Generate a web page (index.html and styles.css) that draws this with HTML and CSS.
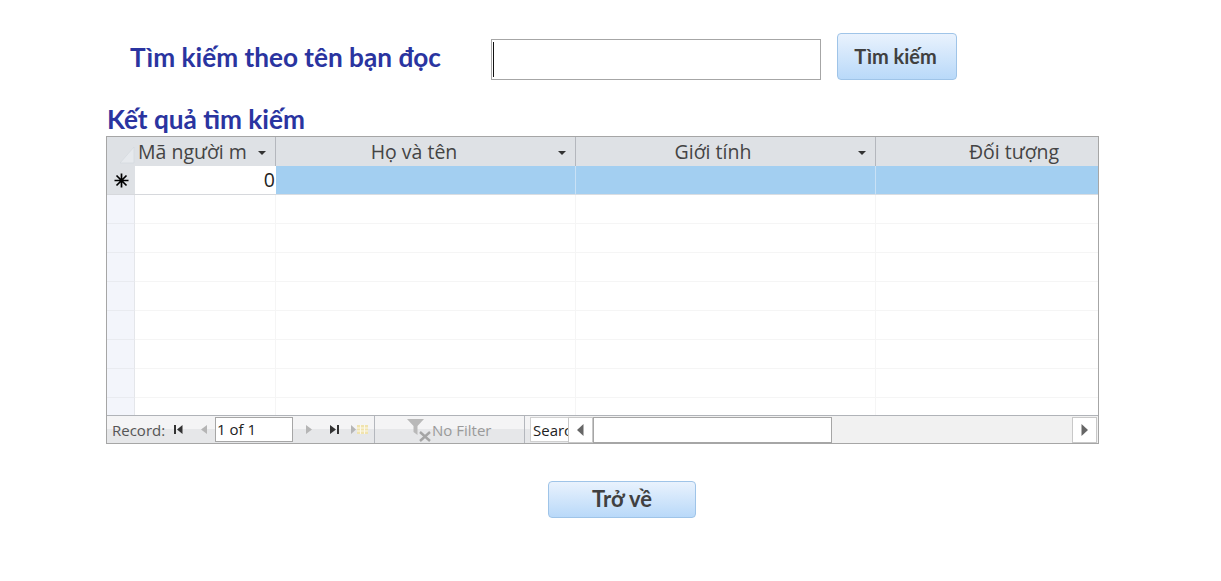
FILE: index.html
```html
<!DOCTYPE html>
<html lang="vi">
<head>
    <meta charset="UTF-8">
    <meta name="viewport" content="width=device-width, initial-scale=1.0">
    <title>Tìm kiếm bạn đọc</title>

    <link rel="stylesheet" href="styles.css">
</head>
<body>
    <div class="fundo">
        <div class="timKiem">
            <h1 class="tieuDe">Tìm kiếm theo tên bạn đọc</h1>
            <div class="oNhap"><span class="conTro"></span></div>
            <button class="nut nutTim">Tìm kiếm</button>
        </div>

        <h2 class="ketQua">Kết quả tìm kiếm</h2>

        <div class="bang">
            <div class="hang hangDau">
                <div class="chon chonDau"><svg width="16" height="18" viewBox="0 0 16 18"><path d="M1 17 L15 1 V17 Z" fill="#e6e9ed" stroke="#d2d6dc" stroke-width="0.6"/></svg></div>
                <div class="cot cot1 dau"><span class="tenCot trai">Mã người m</span><span class="muiTen"></span></div>
                <div class="cot cot2 dau"><span class="tenCot">Họ và tên</span><span class="muiTen"></span></div>
                <div class="cot cot3 dau"><span class="tenCot">Giới tính</span><span class="muiTen"></span></div>
                <div class="cot cot4 dau"><span class="tenCot">Đối tượng</span></div>
            </div>
            <div class="hang hangMoi">
                <div class="chon chonMoi"><svg width="15" height="15" viewBox="0 0 15 15"><path d="M7.5 0.5 V14.5 M0.5 7.5 H14.5 M2.5 2.5 L12.5 12.5 M12.5 2.5 L2.5 12.5" stroke="#000" stroke-width="1.7" fill="none"/></svg></div>
                <div class="cot cot1 so">0</div>
                <div class="cot cot2 chonXanh"></div>
                <div class="cot cot3 chonXanh"></div>
                <div class="cot cot4 chonXanh"></div>
            </div>
            <div class="thanBang">
                <div class="hang"><div class="chon"></div><div class="cot cot1"></div><div class="cot cot2"></div><div class="cot cot3"></div><div class="cot cot4"></div></div>
                <div class="hang"><div class="chon"></div><div class="cot cot1"></div><div class="cot cot2"></div><div class="cot cot3"></div><div class="cot cot4"></div></div>
                <div class="hang"><div class="chon"></div><div class="cot cot1"></div><div class="cot cot2"></div><div class="cot cot3"></div><div class="cot cot4"></div></div>
                <div class="hang"><div class="chon"></div><div class="cot cot1"></div><div class="cot cot2"></div><div class="cot cot3"></div><div class="cot cot4"></div></div>
                <div class="hang"><div class="chon"></div><div class="cot cot1"></div><div class="cot cot2"></div><div class="cot cot3"></div><div class="cot cot4"></div></div>
                <div class="hang"><div class="chon"></div><div class="cot cot1"></div><div class="cot cot2"></div><div class="cot cot3"></div><div class="cot cot4"></div></div>
                <div class="hang"><div class="chon"></div><div class="cot cot1"></div><div class="cot cot2"></div><div class="cot cot3"></div><div class="cot cot4"></div></div>
                <div class="hang"><div class="chon"></div><div class="cot cot1"></div><div class="cot cot2"></div><div class="cot cot3"></div><div class="cot cot4"></div></div>
            </div>
            <div class="thanhDuoi">
                <div class="phanRecord">
                    <span class="chuRecord">Record:</span>
                    <svg class="iconDau" width="11" height="11" viewBox="0 0 11 11"><path d="M1 1 H3 V10 H1 Z M9.5 1 V10 L4 5.5 Z" fill="#333"/></svg>
                    <svg class="iconTruoc" width="8" height="11" viewBox="0 0 8 11"><path d="M7 1 V10 L1 5.5 Z" fill="#b5b5b5"/></svg>
                    <div class="soTrang">1 of 1</div>
                    <svg class="iconSau" width="8" height="11" viewBox="0 0 8 11"><path d="M1 1 V10 L7 5.5 Z" fill="#b5b5b5"/></svg>
                    <svg class="iconCuoi" width="11" height="11" viewBox="0 0 11 11"><path d="M1 1 L7 5.5 L1 10 Z M8 1 H10 V10 H8 Z" fill="#333"/></svg>
                    <svg class="iconMoi" width="19" height="11" viewBox="0 0 19 11"><path d="M1 1 L6 5.5 L1 10 Z" fill="#b5b5b5"/><path d="M7 1 H18 V10 H7 Z" fill="#f0e3ae"/><path d="M10.5 1 V10 M14.5 1 V10 M7 4 H18 M7 7 H18" stroke="#fbf8ea" stroke-width="1"/></svg>
                </div>
                <div class="phanLoc">
                    <svg width="26" height="24" viewBox="0 0 26 24"><path d="M1 1 H18 L11.5 8 V17 L7.5 14 V8 Z" fill="#b9b9b9"/><path d="M14 14 L24 23 M24 14 L14 23" stroke="#a5a5a5" stroke-width="2.4"/></svg>
                    <span>No Filter</span>
                </div>
                <div class="phanTim"><div class="oTim">Search</div></div>
                <div class="cuon">
                    <div class="nutCuon"><svg width="7" height="12" viewBox="0 0 7 12"><path d="M6.5 0 V12 L0 6 Z" fill="#666"/></svg></div>
                    <div class="conChay"></div>
                    <div class="ranhCuon"></div>
                    <div class="nutCuon nutPhai"><svg width="7" height="12" viewBox="0 0 7 12"><path d="M0.5 0 V12 L7 6 Z" fill="#666"/></svg></div>
                </div>
            </div>
        </div>

        <div class="chanTrang">
            <button class="nut nutVe">Trở về</button>
        </div>
    </div>
</body>
</html>
```

FILE: styles.css
```css
*{
    box-sizing: border-box;
}
body{
    margin: 0;
    background-color: white;
}
.fundo{
    width: 1221px;
    height: 581px;
    padding: 33px 0 0 106px;
    overflow: hidden;
    font-family: "Open Sans", sans-serif;
}
.timKiem{
    display: flex;
    align-items: flex-start;
    height: 47px;
}
.tieuDe{
    width: 361px;
    margin: 8px 0 0 24px;
    font-family: Lato, sans-serif;
    font-size: 26.2px;
    line-height: 32px;
    font-weight: 700;
    color: #2a34a0;
}
.oNhap{
    width: 330px;
    height: 41px;
    margin-top: 6px;
    padding: 2px 0 2px 1px;
    border: 1px solid #a6a6a6;
    background-color: white;
}
.conTro{
    display: block;
    width: 1px;
    height: 35px;
    background-color: #111;
}
.nut{
    border: 1px solid #9fc4e8;
    border-radius: 4px;
    background: linear-gradient(#e9f2fd, #b9d9f9);
    font-family: Lato, sans-serif;
    font-weight: 700;
    color: #404040;
    padding: 0;
}
.nutTim{
    width: 120px;
    height: 47px;
    margin-left: 16px;
    padding-bottom: 2px;
    padding-right: 3px;
    font-size: 20px;
}
.ketQua{
    margin: 23px 0 0;
    padding-left: 1px;
    height: 33px;
    font-family: Lato, sans-serif;
    font-size: 26.2px;
    line-height: 33px;
    font-weight: 700;
    color: #2a34a0;
}
.bang{
    width: 993px;
    height: 308px;
    border: 1px solid #a6a6a6;
    display: flex;
    flex-direction: column;
    background-color: white;
}
.hang{
    display: flex;
    height: 29px;
    flex-shrink: 0;
}
.chon{
    width: 28px;
    flex-shrink: 0;
    background-color: #f3f5fb;
    border-right: 1px solid #e4e6ea;
    border-bottom: 1px solid #e9ebf0;
    display: flex;
    align-items: center;
    justify-content: center;
}
.chonDau{
    background-color: #dee1e5;
    border: 0;
    justify-content: flex-end;
    align-items: flex-end;
    padding: 0 0 2px 0;
}
.chonMoi{
    background-color: #dee1e5;
    border-right: 0;
    border-bottom-color: #d6d8dc;
}
.cot{
    flex-shrink: 0;
    border-right: 1px solid #f5f5f5;
    border-bottom: 1px solid #f5f5f5;
}
.cot1{ width: 141px; }
.cot2{ width: 300px; }
.cot3{ width: 300px; }
.cot4{ width: 222px; border-right: 0; }
.dau{
    display: flex;
    align-items: center;
    background-color: #dee1e5;
    border: 0;
    border-right: 1px solid #b4b7bd;
    font-size: 19.5px;
    color: #444;
    padding-bottom: 1px;
}
.cot4.dau{
    border-right: 0;
}
.tenCot{
    flex: 1;
    text-align: center;
    white-space: nowrap;
}
.cot2 .tenCot{
    padding-right: 6px;
}
.cot3 .tenCot{
    padding-right: 8px;
}
.cot4 .tenCot{
    padding-left: 54px;
}
.trai{
    text-align: left;
    padding-left: 3px;
}
.muiTen{
    width: 0;
    height: 0;
    margin-right: 9px;
    margin-top: 3px;
    border-left: 4px solid transparent;
    border-right: 4px solid transparent;
    border-top: 4px solid #333;
}
.so{
    background-color: white;
    border-bottom-color: #d6d8dc;
    border-right: 0;
    text-align: right;
    padding-right: 1px;
    font-size: 19.5px;
    line-height: 28px;
    color: #222;
}
.chonXanh{
    background-color: #a3cff1;
    border-bottom-color: #d9dde2;
    border-right-color: #c9e1f5;
}
.thanBang{
    height: 220px;
    overflow: hidden;
    flex-shrink: 0;
}
.thanhDuoi{
    height: 28px;
    display: flex;
    border-top: 1px solid #b0b3b8;
    font-size: 15px;
    color: #555;
    background: linear-gradient(#f4f4f5 50%, #e6e7e9 50%);
}
.phanRecord{
    width: 268px;
    display: flex;
    align-items: center;
    padding-left: 5px;
    border-right: 1px solid #b4b7bd;
}
.chuRecord{
    width: 61px;
    white-space: nowrap;
}
.iconTruoc{
    margin-left: 16px;
}
.soTrang{
    width: 78px;
    height: 25px;
    margin-left: 7px;
    padding-left: 1px;
    border: 1px solid #a6a6a6;
    background-color: white;
    color: #222;
    line-height: 23px;
}
.iconSau{
    margin-left: 12px;
}
.iconCuoi{
    margin-left: 16px;
}
.iconMoi{
    margin-left: 10px;
}
.phanLoc{
    width: 150px;
    display: flex;
    align-items: center;
    padding-left: 31px;
    border-right: 1px solid #b4b7bd;
    color: #9a9a9a;
}
.phanTim{
    width: 43px;
    padding: 1px 0 0 5px;
    flex-shrink: 0;
}
.oTim{
    width: 38px;
    height: 25px;
    padding-left: 2px;
    overflow: hidden;
    white-space: nowrap;
    background-color: white;
    border: 1px solid #d0d0d0;
    border-right: 0;
    color: #222;
    line-height: 24px;
}
.cuon{
    flex: 1;
    display: flex;
    background-color: #f1f1f1;
    border-top: 1px solid #f1f1f1;
}
.nutCuon{
    width: 25px;
    background-color: white;
    border: 1px solid #c8c8c8;
    display: flex;
    align-items: center;
    justify-content: center;
    flex-shrink: 0;
}
.nutPhai{
    margin-right: 1px;
}
.conChay{
    width: 239px;
    background-color: white;
    border: 1px solid #a6a6a6;
    flex-shrink: 0;
}
.ranhCuon{
    flex: 1;
}
.chanTrang{
    display: flex;
    padding: 37px 0 0 442px;
}
.nutVe{
    width: 148px;
    height: 37px;
    padding-bottom: 2px;
    font-size: 22px;
}
```
